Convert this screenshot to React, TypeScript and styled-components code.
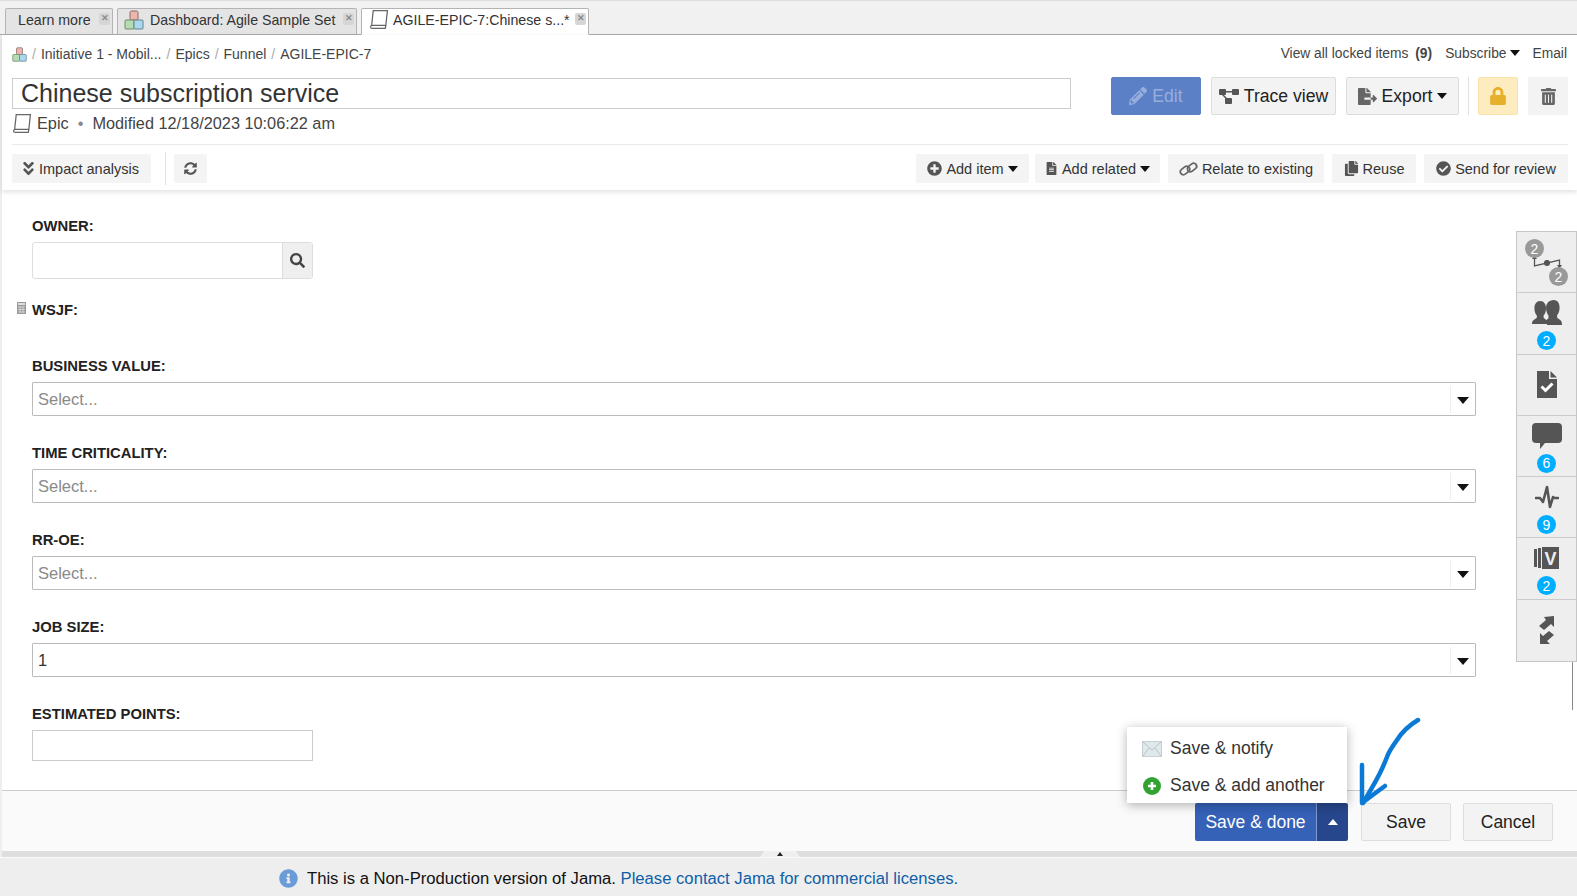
import React from 'react';
import styled, { createGlobalStyle } from 'styled-components';
import {
  FaAngleDoubleDown,
  FaCheckCircle,
  FaCopy,
  FaFileAlt,
  FaFileExport,
  FaInfoCircle,
  FaLock,
  FaPencilAlt,
  FaPlusCircle,
  FaSearch,
  FaSyncAlt,
  FaTrashAlt,
} from 'react-icons/fa';

const GlobalStyle = createGlobalStyle`
  html, body { margin: 0; padding: 0; height: 100%; overflow: hidden; background: #fff; }
  #root { height: 100%; }
  * { box-sizing: border-box; }
  body { font-family: "Liberation Sans", Arial, sans-serif; color: #333; }
`;

const Page = styled.div`
  position: relative;
  display: flex;
  flex-direction: column;
  width: 1577px;
  height: 896px;
  overflow: hidden;
`;

const Caret = styled.span<{ $w: number; $up?: boolean; $color?: string }>`
  display: inline-block;
  flex: none;
  width: 0;
  height: 0;
  border-left: ${p => p.$w / 2}px solid transparent;
  border-right: ${p => p.$w / 2}px solid transparent;
  ${p => (p.$up ? 'border-bottom' : 'border-top')}: ${p => Math.round(p.$w * 0.55)}px solid ${p => p.$color ?? '#111'};
`;

/* tabs */
const TabBar = styled.div`
  display: flex;
  align-items: flex-end;
  height: 35px;
  flex: none;
  padding-left: 5px;
  gap: 4px;
  background: #f1f1f1;
  border-top: 1px solid #ddd;
  border-bottom: 1px solid #aaa;
`;
const Tab = styled.div<{ $active?: boolean; $w: number }>`
  display: flex;
  align-items: center;
  gap: ${p => (p.$active ? 4 : 6)}px;
  width: ${p => p.$w}px;
  height: 27px;
  margin-bottom: -1px;
  padding: 0 2px 4px ${p => (p.$active ? 7 : 6)}px;
  font-size: 14.2px;
  color: #333;
  background: ${p => (p.$active ? '#fff' : '#e4e4e4')};
  border: 1px solid #b4b4b4;
  border-bottom-color: ${p => (p.$active ? '#fff' : '#aaa')};
  border-radius: 2px 2px 0 0;
  white-space: nowrap;
`;
const TabLabel = styled.span<{ $pad?: number }>`
  flex: 1;
  padding-left: ${p => p.$pad ?? 0}px;
`;
const TabClose = styled.span`
  display: flex;
  align-items: center;
  justify-content: center;
  width: 11px;
  height: 12px;
  margin-top: -2px;
  font-size: 9px;
  font-weight: 700;
  line-height: 1;
  color: #8b8b8b;
  background: #d6d6d6;
  border-radius: 2px;
`;

/* body area with the thin strip on the left */
const Workspace = styled.div`
  flex: 1;
  display: flex;
  flex-direction: column;
  min-height: 0;
  border-left: 2px solid #eee;
`;

const Header = styled.header`
  flex: none;
  position: relative;
  z-index: 1;
  padding: 0 9px 7px 10px;
  background: #fff;
  box-shadow: 0 2px 5px rgba(0, 0, 0, 0.12);
`;
const CrumbRow = styled.div`
  display: flex;
  align-items: center;
  justify-content: space-between;
  height: 18px;
  margin: 10px 0 14px;
  font-size: 14px;
`;
const Crumbs = styled.div`
  display: flex;
  align-items: center;
  gap: 5px;
  color: #444;
`;
const Slash = styled.span`
  color: #aaa;
`;
const TopLinks = styled.div`
  display: flex;
  align-items: center;
  gap: 13px;
  margin-top: -2px;
  padding-right: 1px;
  font-size: 13.8px;
  color: #444;
`;
const Link = styled.span`
  display: inline-flex;
  align-items: center;
  gap: 3px;
`;
const MainRow = styled.div`
  display: flex;
  justify-content: space-between;
  height: 68px;
  border-bottom: 1px solid #e9e9e9;
`;
const TitleCol = styled.div`
  width: 1059px;
  padding-top: 1px;
`;
const TitleBox = styled.div`
  height: 31px;
  padding-left: 8px;
  font-size: 25px;
  line-height: 28px;
  color: #333;
  border: 1px solid #ccc;
`;
const Meta = styled.div`
  display: flex;
  align-items: center;
  gap: 5px;
  height: 28px;
  font-size: 16.3px;
  color: #444;
`;
const Dot = styled.span`
  margin: 0 4px;
  color: #888;
`;
const Actions = styled.div`
  display: flex;
  align-items: flex-start;
  gap: 10px;
`;
const ActionButton = styled.div<{ $w: number; $variant?: 'edit' | 'lock' | 'plain' }>`
  display: flex;
  align-items: center;
  justify-content: center;
  gap: 5px;
  width: ${p => p.$w}px;
  height: 38px;
  font-size: 17.6px;
  border-radius: 2px;
  color: ${p => (p.$variant === 'edit' ? '#97aedd' : '#222')};
  background: ${p =>
    p.$variant === 'edit' ? '#5b80c6' : p.$variant === 'lock' ? '#fdecbf' : '#f3f3f3'};
  border: 1px solid
    ${p =>
      p.$variant === 'edit'
        ? '#5b80c6'
        : p.$variant === 'lock'
          ? '#f8e3ab'
          : p.$variant === 'plain'
            ? '#f3f3f3'
            : '#dcdcdc'};
  svg { color: ${p => (p.$variant === 'edit' ? '#97aedd' : p.$variant === 'lock' ? '#e6b02c' : '#666')}; }
`;
const VLine = styled.div<{ $h: number; $ml: number; $mr: number }>`
  width: 1px;
  height: ${p => p.$h}px;
  margin: 0 ${p => p.$mr}px 0 ${p => p.$ml}px;
  background: #e2e2e2;
`;
const Toolbar = styled.div`
  display: flex;
  align-items: center;
  justify-content: space-between;
  margin-top: 9px;
  height: 29px;
`;
const ToolGroup = styled.div<{ $gap: number }>`
  display: flex;
  align-items: center;
  gap: ${p => p.$gap}px;
`;
const ToolButton = styled.div<{ $w: number; $tight?: boolean }>`
  display: flex;
  align-items: center;
  justify-content: center;
  gap: 4px;
  width: ${p => p.$w}px;
  height: 29px;
  margin-right: ${p => (p.$tight ? -2 : 0)}px;
  font-size: 14.5px;
  color: #333;
  background: #f4f4f4;
  border-radius: 2px;
  svg { color: #555; flex: none; }
`;
const ImpactButton = styled(ToolButton)`
  gap: 2px;
  justify-content: flex-start;
  padding-left: 8px;
`;

/* form */
const Form = styled.main`
  flex: 1;
  min-height: 0;
  padding: 28px 0 0 30px;
  background: #fff;
`;
const Label = styled.div<{ $gap: number; $top?: number }>`
  position: relative;
  height: 16px;
  margin-top: ${p => p.$top ?? 0}px;
  margin-bottom: ${p => p.$gap}px;
  font-size: 14.8px;
  line-height: 16px;
  font-weight: 700;
  color: #222;
`;
const CalcMark = styled.span`
  position: absolute;
  left: -15px;
  top: 0;
  display: flex;
`;
const OwnerBox = styled.div`
  display: flex;
  width: 281px;
  height: 37px;
  border: 1px solid #ddd;
  border-radius: 3px;
`;
const OwnerInput = styled.div`
  flex: 1;
`;
const SearchAddon = styled.div`
  display: flex;
  align-items: center;
  justify-content: center;
  width: 30px;
  color: #444;
  background: #efefef;
  border-left: 1px solid #ddd;
  font-size: 15px;
`;
const SelectBox = styled.div`
  display: flex;
  align-items: center;
  width: 1444px;
  height: 34px;
  margin-bottom: 29px;
  border: 1px solid #bbb;
  border-radius: 1px;
`;
const SelectValue = styled.div<{ $placeholder?: boolean }>`
  flex: 1;
  padding: 1px 0 0 5px;
  font-size: 16.5px;
  color: ${p => (p.$placeholder ? '#8a8a8a' : '#333')};
`;
const SelectCaret = styled.div`
  display: flex;
  align-items: center;
  justify-content: center;
  width: 24px;
  height: 100%;
  padding-top: 2px;
`;
const CaretSep = styled.span`
  width: 1px;
  height: 27px;
  background: #eee;
`;
const PlainInput = styled.div`
  width: 281px;
  height: 31px;
  border: 1px solid #ccc;
`;

/* footer */
const Footer = styled.footer`
  flex: none;
  display: flex;
  justify-content: flex-end;
  gap: 12px;
  height: 61px;
  padding: 12px 24px 0 0;
  background: #fafafa;
  border-top: 1px solid #ccc;
`;
const SplitGroup = styled.div`
  position: relative;
  display: flex;
  height: 38px;
  margin-right: 1px;
  color: #fff;
  font-size: 17.5px;
`;
const PrimaryButton = styled.div`
  display: flex;
  align-items: center;
  justify-content: center;
  width: 121px;
  background: #3561b7;
  border-radius: 2px 0 0 2px;
`;
const CaretButton = styled.div`
  display: flex;
  align-items: center;
  justify-content: center;
  width: 32px;
  background: #27478c;
  border-left: 1px solid #7f9ad0;
  border-radius: 0 2px 2px 0;
`;
const PlainButton = styled.div<{ $w: number }>`
  display: flex;
  align-items: center;
  justify-content: center;
  width: ${p => p.$w}px;
  height: 38px;
  font-size: 17.5px;
  color: #222;
  background: #f3f3f3;
  border: 1px solid #ddd;
  border-radius: 2px;
`;
const Popup = styled.div`
  position: absolute;
  right: 1px;
  bottom: 100%;
  z-index: 3;
  width: 220px;
  height: 76px;
  padding-top: 3px;
  color: #333;
  background: #fff;
  box-shadow: 0 2px 10px rgba(0, 0, 0, 0.3);
`;
const PopupRow = styled.div`
  display: flex;
  align-items: center;
  gap: 8px;
  height: 37px;
  padding-left: 15px;
  font-size: 17.5px;
`;
const PopupIcon = styled.span`
  display: flex;
  justify-content: center;
  width: 20px;
`;

/* status */
const Band = styled.div`
  position: relative;
  flex: none;
  height: 6px;
  background: #dedede;
`;
const Handle = styled.div`
  position: absolute;
  left: 758px;
  top: 0;
  width: 40px;
  height: 6px;
  display: flex;
  justify-content: center;
  align-items: center;
  background: #efefef;
  clip-path: polygon(10% 0, 90% 0, 100% 100%, 0 100%);
  &::after {
    content: '';
    border: 3px solid transparent;
    border-top: 0;
    border-bottom: 4px solid #222;
  }
`;
const InfoBar = styled.div`
  flex: none;
  display: flex;
  align-items: center;
  gap: 9px;
  height: 39px;
  margin-left: -2px;
  padding: 3px 0 0 279px;
  font-size: 16.65px;
  color: #111;
  background: #eee;
  border-top: 1px solid #fafafa;
  svg { color: #6a9cd8; }
`;
const InfoLink = styled.span`
  color: #0f5ea8;
`;

/* right rail */
const Rail = styled.aside`
  position: absolute;
  right: 0;
  top: 231px;
  z-index: 2;
  width: 61px;
  background: #eee;
  border: 1px solid #c6c6c6;
`;
const RailItem = styled.div<{ $top?: boolean }>`
  position: relative;
  display: flex;
  flex-direction: column;
  align-items: center;
  justify-content: ${p => (p.$top ? 'flex-start' : 'center')};
  gap: 3px;
  height: 61.3px;
  padding-top: ${p => (p.$top ? 5 : 0)}px;
  border-bottom: 1px solid #cbcbcb;
  &:last-child { border-bottom: 0; }
`;
const RailIcon = styled.div`
  display: flex;
  align-items: center;
  justify-content: center;
  height: 30px;
`;
const RailBadge = styled.span`
  display: flex;
  align-items: center;
  justify-content: center;
  width: 19px;
  height: 19px;
  border-radius: 50%;
  font-size: 14px;
  color: #fff;
  background: #00aeff;
`;
const TraceBadge = styled(RailBadge)<{ $x: number; $y: number }>`
  position: absolute;
  left: ${p => p.$x}px;
  top: ${p => p.$y}px;
  background: #999;
`;
const RailTail = styled.div`
  position: absolute;
  left: 1572px;
  top: 660px;
  width: 1px;
  height: 50px;
  background: #888;
`;
const Scribble = styled.svg`
  position: absolute;
  left: 1350px;
  top: 712px;
  z-index: 4;
`;

const ProjectIcon = ({ size = 15 }: { size?: number }) => (
  <svg width={size} height={size} viewBox="0 0 20 20">
    <rect x="6" y="1" width="8" height="9" rx="1.500" fill="#eeb5ac" stroke="#8a6b66" />
    <rect x="1" y="10" width="9" height="9" rx="1" fill="#b5dcb0" stroke="#6f8a6c" />
    <rect x="10" y="10" width="9" height="9" rx="1" fill="#a9d8ef" stroke="#66828f" />
  </svg>
);

const BookIcon = () => (
  <svg width="20" height="21" viewBox="0 0 19 20" fill="none" stroke="#666" strokeWidth="1.2">
    <path d="M4 1.5h13.5l-1.5 14H2.5z" fill="#fff" />
    <path d="M2.5 15.5C1 16.5 1 18.5 3 18.5h12.5l.5-3" />
  </svg>
);

const TraceNodes = () => (
  <svg width="20" height="18" viewBox="0 0 20 18" fill="#555">
    <rect x="0" y="2" width="7" height="6" rx="1" />
    <rect x="13" y="2" width="7" height="6" rx="1" />
    <rect x="6" y="11" width="7" height="6" rx="1" />
    <path d="M6 4h8v1.6H6zM4 7l5 5-1 1-5-5z" />
  </svg>
);

const LinkRings = () => (
  <svg width="19" height="16" viewBox="0 0 19 16" fill="none" stroke="#666" strokeWidth="1.8">
    <rect x="1" y="6.500" width="10" height="6" rx="3" transform="rotate(-38 6 9.500)" />
    <rect x="8" y="3.500" width="10" height="6" rx="3" transform="rotate(-38 13 6.500)" />
  </svg>
);

const TraceLine = () => (
  <svg width="32" height="14" viewBox="0 0 32 14" fill="#555" stroke="#555" strokeWidth="1.3">
    <path d="M3.500 3v8l25-6v6" fill="none" />
    <circle cx="16" cy="8" r="2.400" />
    <path d="M1 4 3.500 0.500 6 4zM26 10l2.500 3.500L31 10z" stroke="none" />
  </svg>
);

const PeopleIcon = () => (
  <svg width="30" height="26" viewBox="0 0 31 25" fill="#555" preserveAspectRatio="none">
    <path d="M8.500 1c4 0 6 3.200 6 7 0 3-1 5.500-2.500 7v2l3 2.500c1 1 1 2.500 1 3.500H0c0-1 .2-2.500 1.500-3.500L5 17v-2C3.500 13.500 2.500 11 2.500 8c0-3.800 2-7 6-7z" />
    <path d="M22.500 0c4.200 0 6 3.500 6 7.500 0 3-1 5.500-2.500 7v2.500l3.500 2.500c1 .8 1.500 2.500 1.500 4.500H15.500c.2-1.500-.5-3-1.500-4l3-2.500v-2.500C15.500 13 14.500 10.500 14.500 7.500c0-4 3-7.500 8-7.500z" />
  </svg>
);

const DocCheckIcon = () => (
  <svg width="20" height="27" viewBox="0 0 20 27">
    <path d="M0 0h12v8h8v19H0z" fill="#555" />
    <path d="M13.500 0 20 6.500h-6.500z" fill="#555" />
    <path d="M4.500 15.500 8.500 19.500 15.500 12.500" fill="none" stroke="#fff" strokeWidth="3" />
  </svg>
);

const CommentIcon = () => (
  <svg width="30" height="26" viewBox="0 0 30 26" fill="#555">
    <path d="M4 0h22a4 4 0 0 1 4 4v12a4 4 0 0 1-4 4H13l-5 6v-6H4a4 4 0 0 1-4-4V4a4 4 0 0 1 4-4z" />
  </svg>
);

const PulseIcon = () => (
  <svg width="24" height="24" viewBox="0 0 24 24" fill="none" stroke="#555" strokeWidth="2.600" strokeLinejoin="round" strokeLinecap="round">
    <path d="M1 13h4l3 4 4-15 3 20 3-10 1.500 1H23" />
  </svg>
);

const VersionIcon = () => (
  <svg width="25" height="22" viewBox="0 0 25 22" fill="#555">
    <rect x="0" y="2" width="3" height="18" />
    <rect x="4" y="1" width="3" height="20" />
    <rect x="8" y="0" width="17" height="22" />
    <text x="16.500" y="17.500" textAnchor="middle" fontSize="18" fontWeight="700" fontFamily="Liberation Sans" fill="#eee">V</text>
  </svg>
);

const MoveIcon = () => (
  <svg width="16" height="28" viewBox="0 0 16 28" fill="#555">
    <path d="M5 1 15 0v11l-3-3-7 6-5-4 7-6z" />
    <path d="M1 17l3 3 6-5 5 4-7 6 3 3H1z" />
  </svg>
);

const MailIcon = () => (
  <svg width="20" height="16" viewBox="0 0 20 16">
    <rect x="0.500" y="0.500" width="19" height="15" fill="#dfe8ea" stroke="#c4d0d2" />
    <path d="M1 1l9 8 9-8M1 15l6-8M19 15l-6-8" fill="none" stroke="#b7c4c6" />
  </svg>
);

const AddIcon = () => (
  <svg width="18" height="18" viewBox="0 0 18 18">
    <circle cx="9" cy="9" r="9" fill="#32a332" />
    <path d="M9 5v8M5 9h8" stroke="#fff" strokeWidth="2.600" />
  </svg>
);

const CalcIcon = () => (
  <svg width="9" height="12" viewBox="0 0 9 12">
    <rect x="0" y="0" width="9" height="12" fill="#999" />
    <rect x="1" y="1" width="7" height="2" fill="#ddd" />
    <path d="M1 5h7M1 7.500h7M1 10h7M3 4v7M6 4v7" stroke="#ddd" strokeWidth="0.800" />
  </svg>
);

const selectFields = [
  { label: 'BUSINESS VALUE:', value: 'Select...', placeholder: true },
  { label: 'TIME CRITICALITY:', value: 'Select...', placeholder: true },
  { label: 'RR-OE:', value: 'Select...', placeholder: true },
  { label: 'JOB SIZE:', value: '1', placeholder: false },
];

const App = () => {
  return (
    <Page>
      <GlobalStyle />
      <TabBar>
        <Tab $w={108}>
          <TabLabel $pad={6}>Learn more</TabLabel>
          <TabClose>✕</TabClose>
        </Tab>
        <Tab $w={240}>
          <ProjectIcon size={20} />
          <TabLabel>Dashboard: Agile Sample Set</TabLabel>
          <TabClose>✕</TabClose>
        </Tab>
        <Tab $active $w={228}>
          <BookIcon />
          <TabLabel>AGILE-EPIC-7:Chinese s...*</TabLabel>
          <TabClose>✕</TabClose>
        </Tab>
      </TabBar>

      <Workspace>
        <Header>
          <CrumbRow>
            <Crumbs>
              <ProjectIcon />
              <Slash>/</Slash>
              <span>Initiative 1 - Mobil...</span>
              <Slash>/</Slash>
              <span>Epics</span>
              <Slash>/</Slash>
              <span>Funnel</span>
              <Slash>/</Slash>
              <span>AGILE-EPIC-7</span>
            </Crumbs>
            <TopLinks>
              <Link>
                View all locked items&nbsp;<b>(9)</b>
              </Link>
              <Link>
                Subscribe <Caret $w={10} />
              </Link>
              <Link>Email</Link>
            </TopLinks>
          </CrumbRow>

          <MainRow>
            <TitleCol>
              <TitleBox>Chinese subscription service</TitleBox>
              <Meta>
                <BookIcon />
                <span>Epic</span>
                <Dot>•</Dot>
                <span>Modified 12/18/2023 10:06:22 am</span>
              </Meta>
            </TitleCol>
            <Actions>
              <ActionButton $w={90} $variant="edit">
                <FaPencilAlt size={18} />
                Edit
              </ActionButton>
              <ActionButton $w={125}>
                <TraceNodes />
                Trace view
              </ActionButton>
              <ActionButton $w={113}>
                <FaFileExport size={19} />
                Export
                <Caret $w={11} />
              </ActionButton>
              <VLine $h={38} $ml={-1} $mr={-1} />
              <ActionButton $w={40} $variant="lock">
                <FaLock size={18} />
              </ActionButton>
              <ActionButton $w={40} $variant="plain">
                <FaTrashAlt size={17} />
              </ActionButton>
            </Actions>
          </MainRow>

          <Toolbar>
            <ToolGroup $gap={0}>
              <ImpactButton $w={139}>
                <FaAngleDoubleDown size={17} />
                Impact analysis
              </ImpactButton>
              <VLine $h={33} $ml={14} $mr={8} />
              <ToolButton $w={33}>
                <FaSyncAlt size={13} />
              </ToolButton>
            </ToolGroup>
            <ToolGroup $gap={8}>
              <ToolButton $w={113} $tight>
                <FaPlusCircle size={15} />
                Add item
                <Caret $w={10} />
              </ToolButton>
              <ToolButton $w={125}>
                <FaFileAlt size={13} />
                Add related
                <Caret $w={10} />
              </ToolButton>
              <ToolButton $w={156}>
                <LinkRings />
                Relate to existing
              </ToolButton>
              <ToolButton $w={84}>
                <FaCopy size={15} />
                Reuse
              </ToolButton>
              <ToolButton $w={144}>
                <FaCheckCircle size={15} />
                Send for review
              </ToolButton>
            </ToolGroup>
          </Toolbar>
        </Header>

        <Form>
          <Label $gap={8}>OWNER:</Label>
          <OwnerBox>
            <OwnerInput />
            <SearchAddon>
              <FaSearch />
            </SearchAddon>
          </OwnerBox>
          <Label $gap={40} $top={23}>
            <CalcMark>
              <CalcIcon />
            </CalcMark>
            WSJF:
          </Label>
          {selectFields.map(f => (
            <div key={f.label}>
              <Label $gap={8}>{f.label}</Label>
              <SelectBox>
                <SelectValue $placeholder={f.placeholder}>{f.value}</SelectValue>
                <CaretSep />
                <SelectCaret>
                  <Caret $w={12} />
                </SelectCaret>
              </SelectBox>
            </div>
          ))}
          <Label $gap={8}>ESTIMATED POINTS:</Label>
          <PlainInput />
        </Form>

        <Footer>
          <SplitGroup>
            <PrimaryButton>Save &amp; done</PrimaryButton>
            <CaretButton>
              <Caret $w={10} $up $color="#fff" />
            </CaretButton>
            <Popup>
              <PopupRow>
                <PopupIcon>
                  <MailIcon />
                </PopupIcon>
                Save &amp; notify
              </PopupRow>
              <PopupRow>
                <PopupIcon>
                  <AddIcon />
                </PopupIcon>
                Save &amp; add another
              </PopupRow>
            </Popup>
          </SplitGroup>
          <PlainButton $w={90}>Save</PlainButton>
          <PlainButton $w={90}>Cancel</PlainButton>
        </Footer>

        <Band>
          <Handle />
        </Band>
        <InfoBar>
          <FaInfoCircle size={19} />
          <span>
            This is a Non-Production version of Jama. <InfoLink>Please contact Jama for commercial licenses.</InfoLink>
          </span>
        </InfoBar>
      </Workspace>

      <Rail>
        <RailItem>
          <TraceLine />
          <TraceBadge $x={8} $y={7}>2</TraceBadge>
          <TraceBadge $x={32} $y={35}>2</TraceBadge>
        </RailItem>
        <RailItem $top>
          <RailIcon>
            <PeopleIcon />
          </RailIcon>
          <RailBadge>2</RailBadge>
        </RailItem>
        <RailItem>
          <DocCheckIcon />
        </RailItem>
        <RailItem $top>
          <RailIcon>
            <CommentIcon />
          </RailIcon>
          <RailBadge>6</RailBadge>
        </RailItem>
        <RailItem $top>
          <RailIcon>
            <PulseIcon />
          </RailIcon>
          <RailBadge>9</RailBadge>
        </RailItem>
        <RailItem $top>
          <RailIcon>
            <VersionIcon />
          </RailIcon>
          <RailBadge>2</RailBadge>
        </RailItem>
        <RailItem>
          <MoveIcon />
        </RailItem>
      </Rail>
      <RailTail />

      <Scribble width="75" height="100" viewBox="0 0 75 100" fill="none" stroke="#0a7ad6" strokeWidth="4.500" strokeLinecap="round" strokeLinejoin="round">
        <path d="M68 8C58 14 52 20 47 28C43 34 39 39 37 45C35 50 33 55 30 61C25 71 19 81 13 91" />
        <path d="M12 53C12 66 12 80 12 91C20 85 28 79 35 74" />
      </Scribble>
    </Page>
  );
};

export default App;
